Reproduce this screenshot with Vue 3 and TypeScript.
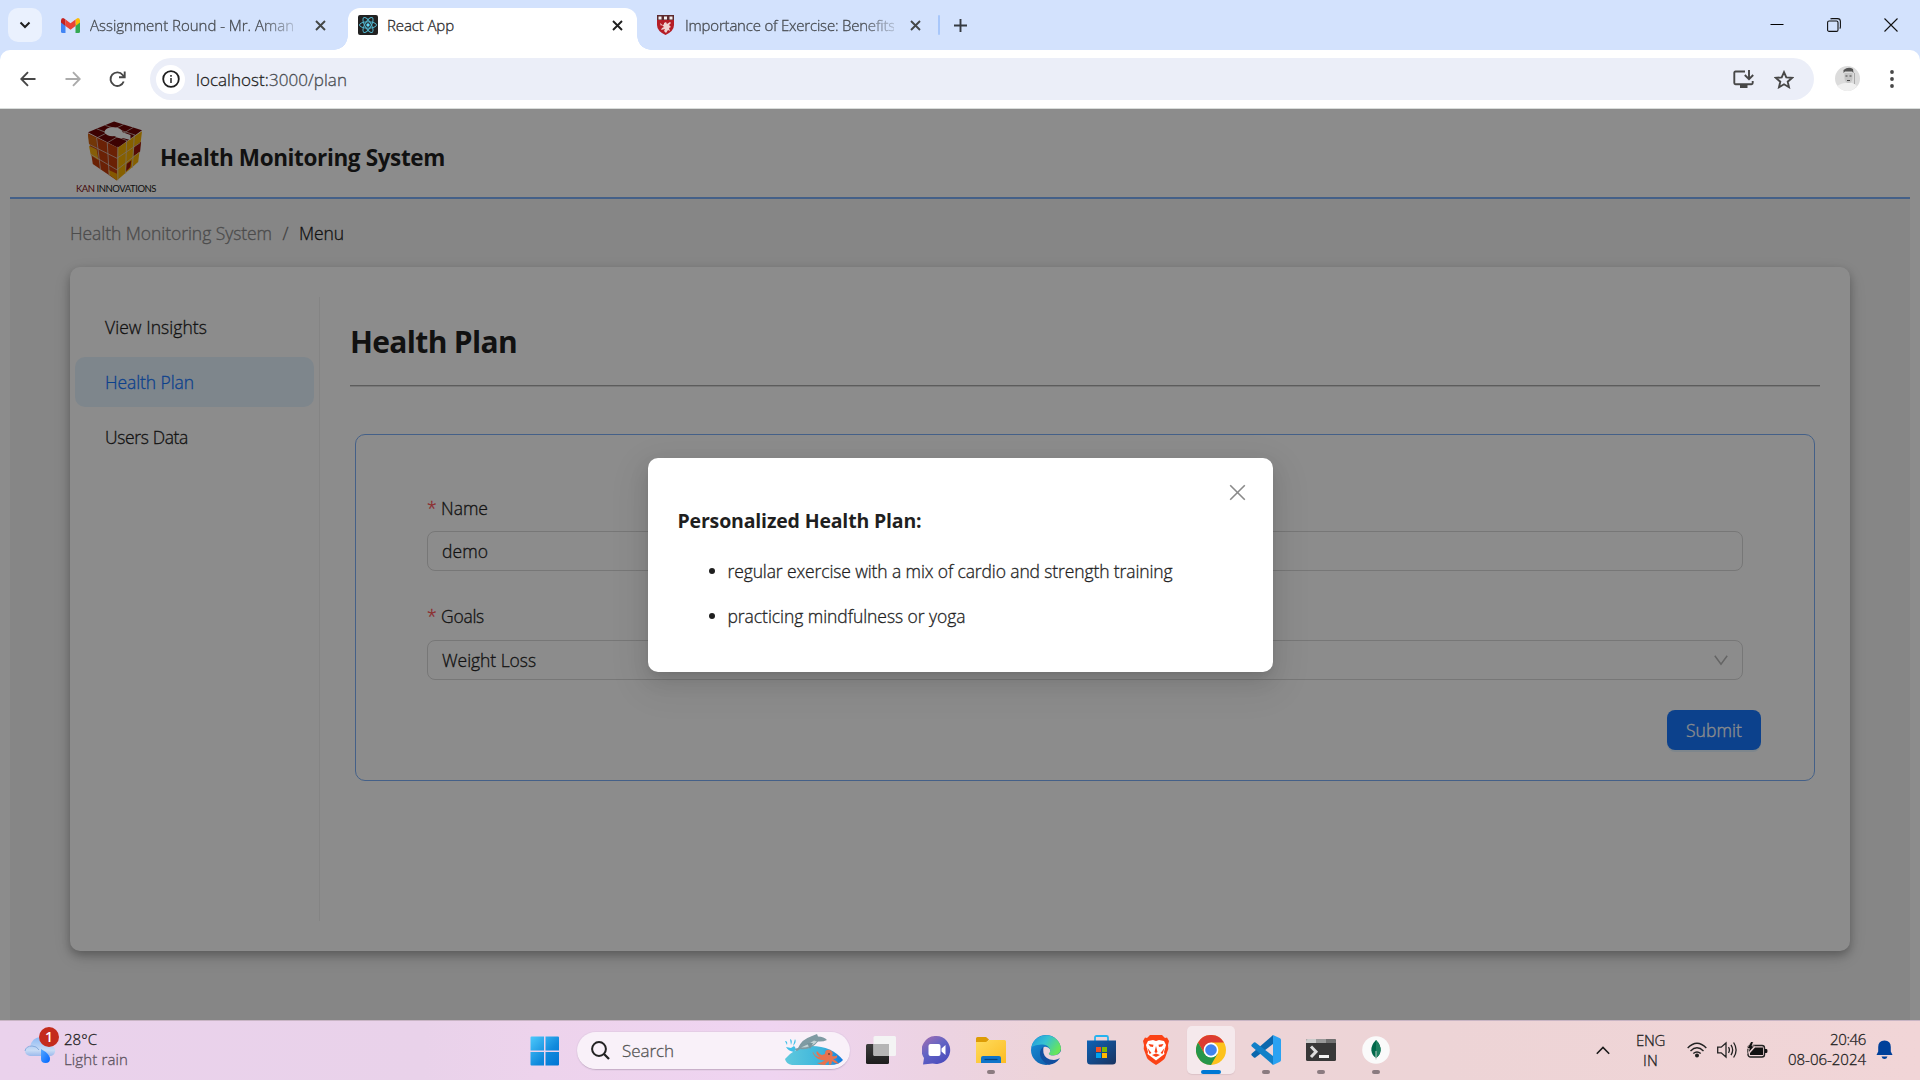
<script setup lang="ts">
import type { Directive } from 'vue'

// Tracks a label so that it fills the given advance width.
const vFit: Directive<HTMLElement, number> = {
  mounted(el, { value }) {
    const width = el.getBoundingClientRect().width
    const count = (el.textContent ?? '').length
    el.style.letterSpacing = `${(value - width) / count}px`
  },
}

const menu = [
  { label: 'View Insights', width: 102, active: false },
  { label: 'Health Plan', width: 89, active: true },
  { label: 'Users Data', width: 83, active: false },
]

const plan = [
  { text: 'regular exercise with a mix of cardio and strength training', width: 445 },
  { text: 'practicing mindfulness or yoga', width: 238 },
]
</script>

<template>
  <div class="screen">
    <div class="tabs">
      <div class="tab-search">
        <svg width="12" height="12" viewBox="0 0 12 12"><path d="M1.500 3.500 6 8 10.500 3.500" fill="none" stroke="#1f1f1f" stroke-width="2" /></svg>
      </div>
      <div class="tab first">
        <svg class="fav" width="19" height="15" viewBox="0 0 19 15">
          <path d="M0 2v11.5Q0 15 1.500 15H4.500V6z" fill="#4285f4" />
          <path d="M19 2v11.500Q19 15 17.500 15h-3V6z" fill="#34a853" />
          <path d="M0 2.500Q0 0 2 0q1 0 2.500 1.500V8L0 4.600z" fill="#c5221f" />
          <path d="M14.500 1.500Q16 0 17 0q2 0 2 2.500v2.100L14.500 8z" fill="#fbbc04" />
          <path d="M4.500 1.500 9.500 5.200 14.500 1.500V8L9.500 11.700 4.500 8z" fill="#ea4335" />
        </svg>
        <div class="tab-title fade"><span v-fit="204">Assignment Round - Mr. Aman</span></div>
        <svg class="x" width="11" height="11" viewBox="0 0 11 11"><path d="M1 1l9 9M10 1l-9 9" stroke="#444746" stroke-width="1.900" /></svg>
      </div>
      <div class="tab active">
        <svg class="fav" width="20" height="20" viewBox="0 0 20 20">
          <rect width="20" height="20" rx="2" fill="#222" />
          <g fill="none" stroke="#51b5cd" stroke-width="1">
            <ellipse cx="10" cy="10" rx="8.500" ry="3.200" />
            <ellipse cx="10" cy="10" rx="8.500" ry="3.200" transform="rotate(60 10 10)" />
            <ellipse cx="10" cy="10" rx="8.500" ry="3.200" transform="rotate(120 10 10)" />
          </g>
          <circle cx="10" cy="10" r="1.700" fill="#61dafb" />
        </svg>
        <div class="tab-title dark"><span v-fit="67">React App</span></div>
        <svg class="x" width="11" height="11" viewBox="0 0 11 11"><path d="M1 1l9 9M10 1l-9 9" stroke="#1f1f1f" stroke-width="1.900" /></svg>
      </div>
      <div class="tab third">
        <svg class="fav" width="17" height="20" viewBox="0 0 17 20">
          <path d="M0 0h17v10q0 6-8.500 10Q0 16 0 10z" fill="#b51d26" />
          <path d="M0 0h17v5H0z" fill="#5d2a2e" />
          <path d="M1.500 1.500h3v3h-3zM7 1.500h3v3H7zM12.500 1.500h3v3h-3z" fill="#f2eeee" />
          <path d="M3 8l2 1.500L4 11zM7 8l2-1 1 2 3-2 1 1-2 2 2 2-2 1 1 3-2-1-2 3-2-2 1-2-4 1 1-2 2-1-2-2 2-.5z" fill="#efd3d1" />
        </svg>
        <div class="tab-title fade"><span v-fit="210">Importance of Exercise: Benefits</span></div>
        <svg class="x" width="11" height="11" viewBox="0 0 11 11"><path d="M1 1l9 9M10 1l-9 9" stroke="#444746" stroke-width="1.900" /></svg>
      </div>
      <i class="tab-sep"></i>
      <svg class="plus" width="13" height="13" viewBox="0 0 13 13"><path d="M6.500 0v13M0 6.500h13" stroke="#353a41" stroke-width="1.900" /></svg>
      <div class="win">
        <svg width="14" height="14" viewBox="0 0 14 14"><path d="M.5 6.500h13" stroke="#000" /></svg>
        <svg width="14" height="14" viewBox="0 0 14 14" fill="none" stroke="#111" stroke-width="1.100"><rect x=".6" y="3" width="10.400" height="10.400" rx="1.500" /><path d="M3.500 1.200Q4 .6 5 .6h5.500q2.900 0 2.900 2.900V9q0 1-.7 1.500" /></svg>
        <svg width="14" height="14" viewBox="0 0 14 14"><path d="M.5.5l13 13M13.500.5l-13 13" stroke="#111" stroke-width="1.100" /></svg>
      </div>
    </div>

    <div class="toolbar-wrap">
      <div class="toolbar">
        <svg class="nav" width="16" height="16" viewBox="0 0 16 16"><path d="M15.500 8H1.500M8 1.200 1.300 8 8 14.800" fill="none" stroke="#474747" stroke-width="1.900" /></svg>
        <svg class="nav" width="16" height="16" viewBox="0 0 16 16"><path d="M.5 8h14M8 1.200 14.700 8 8 14.800" fill="none" stroke="#ababab" stroke-width="1.900" /></svg>
        <svg class="nav reload" width="17" height="17" viewBox="0 0 17 17"><path d="M14.700 10.500A6.800 6.800 0 1 1 13.700 4L15 5.500M15.700.6V6.200H10" fill="none" stroke="#474747" stroke-width="1.900" /></svg>
        <div class="omnibox">
          <div class="site">
            <svg width="18" height="18" viewBox="0 0 18 18"><circle cx="9" cy="9" r="7.800" fill="none" stroke="#1f1f1f" stroke-width="1.800" /><path d="M9 8v5M9 5v1.800" stroke="#474747" stroke-width="1.800" /></svg>
          </div>
          <div class="url"><span v-fit="151"><b>localhost:</b>3000/plan</span></div>
          <svg width="21" height="19" viewBox="0 0 21 19"><path d="M12 1.500H2.500q-1.200 0-1.200 1.200V13q0 1.200 1.200 1.200h16q1.200 0 1.200-1.200v-2M16 0v9M11.800 5 16 9.200 20.200 5" fill="none" stroke="#474747" stroke-width="1.900" /><path d="M7 14h7.500v4H7z" fill="#474747" /></svg>
          <svg class="star" width="20" height="19" viewBox="0 0 20 19"><path d="M10 2.200 12.300 7.400 18 7.900 13.700 11.700 15 17.200 10 14.300 5 17.200 6.300 11.700 2 7.900 7.700 7.400z" fill="none" stroke="#474747" stroke-width="1.900" /></svg>
        </div>
        <svg class="avatar" width="25" height="25" viewBox="0 0 25 25">
          <circle cx="12.500" cy="12.500" r="12.500" fill="#dcdcdc" />
          <path d="M2 20q5-3 8-3h7q3 1 5 3-4 5-9.500 5T2 20z" fill="#f0f0f0" />
          <path d="M9.500 7h8v6q-1 4-4 4t-4-4z" fill="#c4c4c4" />
          <path d="M8.500 7V4q5-4 9.500-1l.5 4-1.500-1.500H10z" fill="#555" />
          <path d="M10.500 10h2m2 0h2M12 14.500h3" stroke="#444" stroke-width="1.200" />
          <path d="M19 7h1v11h-1z" fill="#aaa" />
        </svg>
        <svg class="dots" width="4" height="18" viewBox="0 0 4 18" fill="#474747"><circle cx="2" cy="2" r="1.900" /><circle cx="2" cy="9" r="1.900" /><circle cx="2" cy="16" r="1.900" /></svg>
      </div>
    </div>

    <div class="page">
      <header class="site-head">
        <div class="logo">
          <svg width="56" height="61" viewBox="0 0 58 62">
            <path d="M1 11 28 0 57 9 32 27z" fill="#6e0505" />
            <path d="M1 12 32 27 31 61 6 44z" fill="#c23c0a" />
            <path d="M32 27 57 10 53 42 31 61z" fill="#f5b000" />
            <path d="M2 25l8 4 2 11-8-5z" fill="#f5ac10" /><path d="M22 50l9 4v7l-8-6z" fill="#f0a000" />
            <path d="M49 26l7-5-1 10-7 5z" fill="#9a140a" /><path d="M41 44l5-4-1 7-5 5z" fill="#9c1608" />
            <path d="M1 13l9 4v10l-8-4z" fill="#cf6510" />
            <g fill="none" stroke="#d8c8c0" stroke-width=".8">
              <path d="M10 7.500 42 20M19 4 50 14M10 17 38 3M21 22 48 6M10 17l4 33M21 22l2 34M3 24l28 14 24-16M4 34l27 16L54 32M41 20l-1 34M49 14l-2 34M32 26v35" />
            </g>
            <path d="M18 11q1-5 9-5 8 0 10 5l8 3v5l-8-2q-4 1-8-2-8 1-11-4z" fill="#fff" />
          </svg>
          <div class="logo-text"><span v-fit="80"><em>KAN</em> INNOVATIONS</span></div>
        </div>
        <h1><span v-fit="285">Health Monitoring System</span></h1>
      </header>
      <main class="layout">
        <nav class="crumbs"><span v-fit="202">Health Monitoring System</span><span class="slash">/</span><span v-fit="45" class="here">Menu</span></nav>
        <section class="panel">
          <aside>
            <div v-for="m in menu" :key="m.label" class="item" :class="{ on: m.active }"><span v-fit="m.width">{{ m.label }}</span></div>
          </aside>
          <div class="content">
            <h2><span v-fit="167">Health Plan</span></h2>
            <div class="rule"></div>
            <form class="form">
              <label><i>*</i><span v-fit="47">Name</span></label>
              <div class="field"><span v-fit="46">demo</span></div>
              <label class="second"><i>*</i><span v-fit="43">Goals</span></label>
              <div class="field">
                <span v-fit="94">Weight Loss</span>
                <svg width="14" height="11" viewBox="0 0 14 11"><path d="M.8.8 7 9.300 13.200.8" fill="none" stroke="#b8b8b8" stroke-width="1.500" /></svg>
              </div>
              <div class="actions"><button type="button"><span v-fit="56">Submit</span></button></div>
            </form>
          </div>
        </section>
      </main>
      <div class="mask">
        <div class="modal">
          <svg class="close" width="17" height="17" viewBox="0 0 17 17"><path d="M1.200 1.200 15.800 15.800M15.800 1.200 1.200 15.800" stroke="#8a8a8a" stroke-width="1.600" /></svg>
          <h3><span v-fit="244">Personalized Health Plan:</span></h3>
          <ul>
            <li v-for="p in plan" :key="p.text"><span v-fit="p.width">{{ p.text }}</span></li>
          </ul>
        </div>
      </div>
    </div>

    <footer class="taskbar">
      <div class="weather">
        <svg width="36" height="40" viewBox="0 0 36 40">
          <defs>
            <linearGradient id="cl" x1="0" y1="0" x2="0" y2="1"><stop offset="0" stop-color="#8db9f5" /><stop offset=".7" stop-color="#c9dcf5" /><stop offset="1" stop-color="#9bb9ec" /></linearGradient>
            <linearGradient id="dr" x1="0" y1="0" x2="1" y2="1"><stop offset="0" stop-color="#55a9ff" /><stop offset="1" stop-color="#0064ff" /></linearGradient>
          </defs>
          <path d="M6 20Q8 10 17 10q9 0 11 9 4 2 3 6-1 4-5 4H6q-5-1-5-5t5-4z" fill="url(#cl)" />
          <path d="M1 24q1-5 7-5 5 0 7 4" fill="none" stroke="#86abdf" />
          <path d="M17 22q9 5 9 10 0 4-4.500 4T17 32z" fill="url(#dr)" />
          <circle cx="25" cy="10" r="10" fill="#c42b1c" />
          <text x="25" y="15" text-anchor="middle" font-size="14" font-weight="600" fill="#fff">1</text>
        </svg>
        <div class="stack"><span v-fit="33">28°C</span><span v-fit="64" class="dim">Light rain</span></div>
      </div>

      <svg class="start" width="30" height="30" viewBox="0 0 30 30">
        <defs><linearGradient id="wn" x1="0" y1="0" x2="1" y2="1"><stop offset="0" stop-color="#4cc9fb" /><stop offset=".6" stop-color="#1089dc" /><stop offset="1" stop-color="#0074d4" /></linearGradient></defs>
        <path d="M1.500.5H14v14H.5v-13q0-1 1-1zM15.500.5H28q1 0 1 1v13H15.500zM.5 16H14v13.500H1.500q-1 0-1-1zM15.500 16H29v12.500q0 1-1 1H15.500z" fill="url(#wn)" />
      </svg>
      <div class="search">
        <svg width="19" height="19" viewBox="0 0 19 19"><circle cx="8" cy="8" r="6.900" fill="none" stroke="#222" stroke-width="2" /><path d="M13 13l5 5" stroke="#222" stroke-width="2.300" /></svg>
        <span v-fit="52">Search</span>
        <svg class="dolphin" width="60" height="32" viewBox="0 0 60 32">
          <defs><linearGradient id="sea"><stop offset="0" stop-color="#5fc9dd" /><stop offset=".65" stop-color="#3cb4dc" /><stop offset="1" stop-color="#1278dd" /></linearGradient></defs>
          <path d="M1 25Q10 14 25 12q22-1 34 14-4 5-13 5H8q-6-1-7-6z" fill="url(#sea)" />
          <path d="M10 15l4-1q4-9 14-12l5-2 1 2.500q6 0 9 3.500-4 2-9 1.500-7 9-18 7.500l-3 2z" fill="#7f9ba3" />
          <path d="M17 13.500q11 0 16-6l-3-1q-5 4-13 7z" fill="#c3d3d5" /><path d="M23 9l3 6 3-6z" fill="#75949c" />
          <path d="M1 7q3 0 2 4zM6 5q3 1 1 6zM11 5q2 3-2 7zM2 13l5 1 3-2q3 2 0 6-6-1-8-5z" fill="#40bfe8" />
          <path d="M41 20q0-5 5-4 4 2 2 6 4 1 5-1 1 4-4 4 4 2 6 5-4 0-7-3 0 3-2 4-2-1-1-4-3 2-4 4-5 0-8-2 5 0 8-3-7 1-11-5-2-3-1-3 2 5 7 5-5-3-3-6 2 3 5 4z" fill="#e8724f" />
          <circle cx="45" cy="20" r="1" fill="#743" />
        </svg>
      </div>
      <div class="apps">
        <div class="app">
          <svg width="30" height="28" viewBox="0 0 30 28"><defs><linearGradient id="tv" x1="0" y1="0" x2="0" y2="1"><stop offset="0" stop-color="#3c3c3c" /><stop offset="1" stop-color="#1d1d1d" /></linearGradient></defs><rect y="8" width="23" height="20" rx="1.500" fill="url(#tv)" /><rect x="7.500" y="0" width="22.500" height="20" rx="1.500" fill="#f4f4f4" /><path d="M7.500 8H23v12H8.500q-1 0-1-1z" fill="#b5b5b5" /></svg>
        </div>
        <div class="app">
          <svg width="29" height="29" viewBox="0 0 29 29"><defs><linearGradient id="ch" x1="0" y1="0" x2=".7" y2="1"><stop offset="0" stop-color="#a86fb0" /><stop offset=".5" stop-color="#6264c4" /><stop offset="1" stop-color="#4a4cbd" /></linearGradient></defs><path d="M14.500 0a14 14 0 1 1-4 27.500L1 28.500 2 22A14.200 14.200 0 0 1 14.500 0z" fill="url(#ch)" /><rect x="6.500" y="8" width="12" height="12" rx="2" fill="#fff" /><path d="M19.500 12.500l4-3.500v10l-4-3.500z" fill="#fff" /></svg>
        </div>
        <div class="app run">
          <svg width="30" height="28" viewBox="0 0 30 28"><defs><linearGradient id="fo" x1="0" y1="0" x2="1" y2="1"><stop offset="0" stop-color="#ffdb5c" /><stop offset="1" stop-color="#fcbc23" /></linearGradient></defs><path d="M0 2.500Q0 1 1.500 1H10l3 2.500L10 7H0z" fill="#dd9c05" /><path d="M0 6h10l3-2h15.500q1.500 0 1.500 1.500V27H0z" fill="url(#fo)" /><path d="M5 27v-5q0-2 2-2h16q2 0 2 2v5z" fill="#0f74c9" /><path d="M8.500 23.500h13" stroke="#06447f" stroke-width="1.200" /></svg>
        </div>
        <div class="app">
          <svg width="30" height="30" viewBox="0 0 30 30"><defs><linearGradient id="e1" x1="0" y1="0" x2="1" y2=".5"><stop offset="0" stop-color="#2094dc" /><stop offset=".5" stop-color="#36c1d3" /><stop offset="1" stop-color="#67e55c" /></linearGradient><linearGradient id="e2" x1="0" y1="0" x2="1" y2="1"><stop offset="0" stop-color="#1894dc" /><stop offset="1" stop-color="#0c4f9e" /></linearGradient></defs><circle cx="15" cy="15" r="15" fill="url(#e2)" /><path d="M.5 12A15 15 0 0 1 30 13q0 7-7.500 7.500-4.500 0-4.700-2 2-1.500 1.300-4Q17.500 10 12 9.500 5 9 .5 12z" fill="url(#e1)" /><path d="M12.500 12Q10 16 12 20q4 6 11 5.500 3-.5 5-2L30 21v-5q-2 4-7.500 4.500-4.500 0-4.700-2 2-1.500 1.300-4-2-3.500-6.600-2.500z" fill="#eed5dc" /><path d="M12.500 11.500Q7 16 10 23q3 5 8 6.800 7-.8 11-6.800-3 2-6 2-9-.5-10.500-7-.5-3 0-6.500z" fill="#114f9f" /></svg>
        </div>
        <div class="app">
          <svg width="29" height="30" viewBox="0 0 29 30"><defs><linearGradient id="st" x1="0" y1="0" x2="1" y2="1"><stop offset="0" stop-color="#0e62b5" /><stop offset="1" stop-color="#193360" /></linearGradient></defs><path d="M8 6V2.500Q8 1 9.500 1h10Q21 1 21 2.500V6" fill="none" stroke="#25b3ef" stroke-width="1.800" /><path d="M0 5.500h29V26q0 3.500-3.500 3.500h-22Q0 29.500 0 26z" fill="url(#st)" /><path d="M9 12h5v5H9z" fill="#f25022" /><path d="M15 12h5v5h-5z" fill="#7fba00" /><path d="M9 18h5v5H9z" fill="#00a4ef" /><path d="M15 18h5v5h-5z" fill="#ffb900" /></svg>
        </div>
        <div class="app">
          <svg width="26" height="30" viewBox="0 0 26 30"><path d="M7 0h12l3 3 2-.5L26 6l-1 4 .3 4-3.300 9q-1 2-9 7-8-5-9-7L.7 14 1 10 0 6l2-3.500L4 3z" fill="#fb4216" /><path d="M5 6l5-1 3 1 3-1 5 1 2 4-2 7 .5 2-4 3-4.500 3.500L8.500 22l-4-3 .5-2-2-7z" fill="#fff" /><path d="M5.500 9l5 .8-.5 2.200-3-.5zM20.500 9l-5 .8.500 2.200 3-.5zM13 11l1.500 6-1.500 1-1.500-1zM4.500 13l4 5-2 1zM21.500 13l-4 5 2 1zM9 20l4-1.500L17 20l-4 2z" fill="#fb4216" /></svg>
        </div>
        <div class="app current">
          <svg width="30" height="30" viewBox="0 0 30 30"><circle cx="15" cy="15" r="15" fill="#fdc21c" /><path d="M2 7.500A15 15 0 0 1 28 7.500H15L8.500 18.800z" fill="#dd3b30" /><path d="M2 7.500 8.500 18.800 21.500 18.800 15 30A15 15 0 0 1 2 7.500z" fill="#26964a" /><circle cx="15" cy="15" r="7.400" fill="#fff" /><circle cx="15" cy="15" r="5.800" fill="#4083ee" /></svg>
        </div>
        <div class="app run">
          <svg width="30" height="30" viewBox="0 0 30 30"><path d="M22 0l7 3.300q1 .5 1 1.700v20q0 1.200-1 1.700L22 30z" fill="#2aa2f2" /><path d="M22 0v9L4.500 22.500q-.8.5-1.600 0L.8 20.600q-1-1 0-2z" fill="#0b67ad" /><path d="M22 30v-9L4.500 7.500q-.8-.5-1.600 0L.8 9.400q-1 1 0 2z" fill="#1180c8" /></svg>
        </div>
        <div class="app run">
          <svg width="30" height="22" viewBox="0 0 30 22"><rect width="30" height="22" rx="1.500" fill="#383838" /><path d="M0 4V1.500Q0 0 1.500 0H10v4z" fill="#ccc" /><path d="M10 0h10v4H10z" fill="#999" /><path d="M20 0h8.500Q30 0 30 1.500V4H20z" fill="#707070" /><path d="M5 7.500 10 12.700 5 18" fill="none" stroke="#ddd" stroke-width="3" /><path d="M13 16h10v3H13z" fill="#f2f2f2" /></svg>
        </div>
        <div class="app run">
          <svg width="28" height="28" viewBox="0 0 28 28"><circle cx="14" cy="14" r="13.800" fill="#fafafa" /><path d="M14 4q5 5 4.600 10.500Q18 19.500 14 22q-4-2.500-4.600-7.500Q9 9 14 4z" fill="#00684a" /><path d="M14 4q5 5 4.600 10.500Q18 19.500 14 22z" fill="#1d7f5f" /><path d="M14 15v8.500" stroke="#b7c9bf" stroke-width="1" /></svg>
        </div>
      </div>

      <div class="tray">
        <svg width="14" height="9" viewBox="0 0 14 9"><path d="M.8 7.800 7 1.500 13.200 7.800" fill="none" stroke="#1a1a1a" stroke-width="1.600" /></svg>
        <div class="stack lang"><span v-fit="29">ENG</span><span v-fit="15">IN</span></div>
        <svg class="wifi" width="20" height="16" viewBox="0 0 20 16" fill="none" stroke="#222" stroke-width="1.400"><path d="M.7 6Q10-3.500 19.300 6M3.500 8.900q6.500-6.300 13 0M6.300 11.600q3.700-3.400 7.400 0" /><circle cx="10" cy="13.500" r="1.300" fill="#222" /></svg>
        <svg class="vol" width="21" height="18" viewBox="0 0 21 18" fill="none" stroke="#222" stroke-width="1.300"><path d="M.7 6.200h3.500L9 2v14l-4.800-4.200H.7zM11.500 6.200q1.800 2.800 0 5.600M14 3.800q3.300 5.200 0 10.400M16.600 1.500q5 7.500 0 15" /></svg>
        <svg class="bat" width="21" height="17" viewBox="0 0 21 17"><rect x="1" y="3.500" width="16.500" height="11.500" rx="2.500" fill="none" stroke="#222" stroke-width="1.400" /><path d="M8 5.500h8v7.500H3V11z" fill="#111" /><path d="M18 7h1.500q1 0 1 2t-1 2H18z" fill="#111" /><path d="M4-.5 0 6.500h2.300L1 11.500 7.500 4H5L6.500-.5z" fill="#111" stroke="#f0d5d6" stroke-width=".7" /></svg>
        <div class="stack time"><span v-fit="36">20:46</span><span v-fit="78">08-06-2024</span></div>
        <svg class="bell" width="17" height="20" viewBox="0 0 17 20"><path d="M8.500.5q6.300.3 6.300 6.500v4.500l1.700 3.500H.5l1.700-3.500V7Q2.200.8 8.500.5zM5.500 16.500h6q-.8 2.500-3 2.500t-3-2.500z" fill="#00409a" /></svg>
      </div>
    </footer>
  </div>
</template>

<style scoped>
* { box-sizing: border-box; }
.screen { width: 1920px; height: 1080px; overflow: hidden; display: flex; flex-direction: column; font-family: "Open Sans", "Noto Sans", sans-serif; font-size: 17.5px; font-weight: 300; -webkit-text-stroke: .3px currentColor; color: #1f1f1f; background: #fff; white-space: nowrap; }
svg { display: block; flex: none; }
span { display: inline-block; }
h1, h2, h3, ul { margin: 0; padding: 0; }
h1, h2, h3, .logo-text, text { -webkit-text-stroke: 0; }
i, em { font-style: normal; }

.tabs { height: 50px; flex: none; background: #d3e2fd; display: flex; align-items: center; font-size: 15px; }
.tab-search { width: 34px; height: 34px; margin-left: 8px; border-radius: 10px; background: #eaf1fe; display: flex; align-items: center; justify-content: center; }
.tab { display: flex; align-items: center; height: 50px; flex: none; }
.tab-title { height: 22px; line-height: 22px; color: #474b50; overflow: hidden; }
.tab-title.dark { color: #2a2a2a; width: 221px; margin-left: 9px; }
.fade { mask-image: linear-gradient(90deg, #000 calc(100% - 32px), rgba(0, 0, 0, .25)); }
.tab.first { width: 306px; padding-left: 19px; }
.first .tab-title { width: 204px; margin-left: 10px; }
.first .x { margin-left: 21px; }
.tab.active { position: relative; width: 289px; height: 42px; margin-top: 8px; padding: 0 0 8px 10px; background: #fff; border-radius: 12px 12px 0 0; }
.active::before, .active::after { content: ""; position: absolute; bottom: 0; width: 14px; height: 14px; }
.active::before { left: -14px; background: radial-gradient(circle at 0 0, transparent 13.500px, #fff 14px); }
.active::after { right: -14px; background: radial-gradient(circle at 100% 0, transparent 13.500px, #fff 14px); }
.active .x { margin-left: 4px; }
.tab.third { width: 301px; padding-left: 20px; }
.third .tab-title { width: 209px; margin-left: 11px; }
.third .x { margin-left: 16px; }
.tab-sep { width: 2px; height: 20px; background: #a8c7fa; border-radius: 1px; }
.plus { margin-left: 14px; }
.win { margin-left: auto; margin-right: 22px; display: flex; gap: 43px; }

.toolbar-wrap { height: 59px; flex: none; background: #d3e2fd; }
.toolbar { height: 59px; background: #fff; border-radius: 10px 10px 0 0; border-bottom: 1px solid #d8dcda; display: flex; align-items: center; padding-left: 20px; }
.nav { margin-right: 29px; }
.reload { margin: 0 24px 0 -1px; }
.omnibox { width: 1664px; height: 42px; border-radius: 21px; background: #ebeef8; display: flex; align-items: center; padding: 0 20px 0 6px; }
.site { width: 29px; height: 29px; border-radius: 50%; background: #fff; display: flex; align-items: center; justify-content: center; }
.url { flex: 1; margin-left: 11px; font-size: 17px; color: #474b50; }
.url b { font-weight: inherit; color: #1f1f1f; }
.star { margin-left: 20px; }
.avatar { margin-left: 21px; margin-top: -1px; }
.dots { margin-left: 30px; }

.page { position: relative; height: 911px; flex: none; background: #fff; padding: 0 10px; display: flex; flex-direction: column; }
.site-head { height: 90px; flex: none; border-bottom: 2px solid #7db0f8; display: flex; padding-left: 66px; }
.logo { width: 80px; padding-top: 12px; display: flex; flex-direction: column; align-items: center; }
.logo svg { margin-right: 2px; }
.logo-text { font-family: Lato, sans-serif; font-size: 9.5px; font-weight: 400; line-height: 14px; color: #222; height: 14px; width: 80px; }
.logo-text em { color: #801010; }
h1 { font-size: 22.5px; line-height: 32px; font-weight: 700; margin: 33px 0 0 4px; }
.layout { flex: 1; background: #f5f5f5; padding: 0 60px; }
.crumbs { height: 68px; line-height: 69px; color: #8a8a8a; display: flex; }
.slash { width: 27px; text-align: center; color: #777; }
.here { color: #1f1f1f; }
.panel { height: 684px; background: #fff; border-radius: 10px; box-shadow: 0 4px 8px rgba(0, 0, 0, .24), 0 6px 20px rgba(0, 0, 0, .14); display: flex; padding-top: 30px; }
aside { width: 250px; height: 624px; border-right: 1px solid #f0f0f0; padding: 5px 5px 0; }
.item { height: 50px; line-height: 51px; padding-left: 30px; border-radius: 10px; margin-bottom: 5px; }
.item.on { background: #e6f4ff; color: #1677ff; }
.content { width: 1470px; margin-left: 30px; }
h2 { font-size: 30px; line-height: 44px; margin-top: 23px; font-weight: 700; }
.rule { height: 2px; margin-top: 21px; background: #a8a8a8; border-bottom: 1px solid #dcdcdc; }
.form { margin: 47px 5px 0; height: 347px; border: 1px solid #7db0f8; border-radius: 10px; padding: 57px 71px 0; }
label { display: flex; height: 39px; line-height: 32px; align-items: flex-start; }
label i { width: 14px; color: #ff4d4f; }
.second { margin-top: 29px; height: 40px; }
.field { height: 40px; border: 1px solid #d9d9d9; border-radius: 8px; padding: 0 14px; display: flex; align-items: center; justify-content: space-between; }
.actions { display: flex; justify-content: flex-end; margin: 30px -18px 0 0; }
button { width: 94px; height: 40px; padding: 0; border: 0; border-radius: 8px; background: #1677ff; color: #fff; font: inherit; box-shadow: 0 2px 0 rgba(5, 145, 255, .1); }

.mask { position: absolute; inset: 0; background: rgba(0, 0, 0, .45); display: flex; align-items: flex-start; justify-content: center; padding-top: 349px; }
.modal { position: relative; width: 625px; height: 214px; background: #fff; border-radius: 10px; box-shadow: 0 8px 20px rgba(0, 0, 0, .1), 0 4px 8px -5px rgba(0, 0, 0, .14), 0 12px 35px 10px rgba(0, 0, 0, .06); padding: 47px 30px 0; }
.close { position: absolute; top: 26px; right: 26.5px; }
h3 { font-size: 19.5px; line-height: 32px; font-weight: 700; }
ul { list-style: none; margin-top: 18px; }
li { display: flex; align-items: center; height: 32px; margin-bottom: 13px; padding-left: 31px; }
li::before { content: ""; width: 6px; height: 6px; border-radius: 50%; background: #1f1f1f; margin-right: 13px; }

.taskbar { position: relative; height: 60px; flex: none; border-top: 1px solid #c8b5c4; background: linear-gradient(90deg, #ead2ec 0, #e9d2ea 22%, #edd3ec 28%, #efd4f1 40%, #ecd3e2 49%, #edd4d8 55%, #edd4d6 75%, #f1d5d7 100%); display: flex; align-items: center; }
.weather { display: flex; width: 530px; padding-left: 24px; align-items: center; }
.weather svg { margin-right: 4px; margin-top: -7px; }
.stack { display: flex; flex-direction: column; font-size: 15px; line-height: 20px; align-items: flex-start; margin-top: -1px; }
.weather .stack { margin-top: -4px; }
.dim { color: #5c5360; }
.search { width: 273px; height: 38px; margin: 0 0 0 17px; border-radius: 19px; background: #f9f1f9; border-bottom: 1px solid #c9b0ca; box-shadow: 0 0 0 1px #e5cde6; display: flex; align-items: center; padding: 0 6px 0 14px; font-size: 17px; color: #555; }
.search > span { margin-left: 12px; }
.dolphin { margin-left: auto; }
.apps { display: flex; margin-left: 7px; margin-top: -1px; gap: 7px; }
.app { position: relative; width: 48px; height: 48px; border-radius: 5px; display: flex; align-items: center; justify-content: center; }
.run::after, .current::after { content: ""; position: absolute; bottom: 0; height: 4px; width: 8px; border-radius: 2px; background: #8b7b80; }
.current { background: #f5e9ec; box-shadow: 0 1px 1px #dcc3c8; }
.current::after { width: 20px; background: #0078d4; }
.tray { margin-left: auto; padding-right: 27px; display: flex; align-items: center; margin-top: -1px; }
.lang { margin-left: 26px; margin-right: 22px; align-items: center; }
.vol { margin-left: 10px; }
.bat { margin-left: 9px; }
.time { margin-left: 20px; margin-right: 10px; align-items: flex-end; margin-top: -3px; }
</style>

<style>
body { margin: 0; overflow: hidden; }
</style>
